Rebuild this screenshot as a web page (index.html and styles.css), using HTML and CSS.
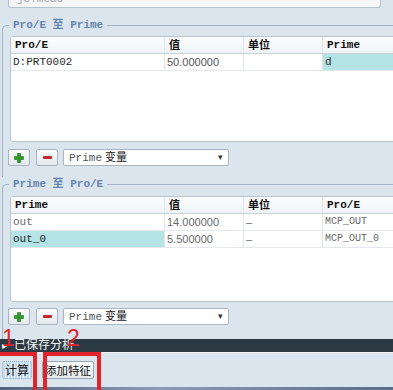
FILE: index.html
```html
<!DOCTYPE html>
<html>
<head>
<meta charset="utf-8">
<link rel="stylesheet" href="styles.css">
</head>
<body>
<div class="top"><span>jc.mcad</span></div>

<fieldset class="group">
  <legend>Pro/E 至 Prime</legend>
  <div class="group-body g1">
    <div class="table">
      <div class="row head">
        <div class="cell mono">Pro/E</div>
        <div class="cell">值</div>
        <div class="cell">单位</div>
        <div class="cell mono">Prime</div>
      </div>
      <div class="row">
        <div class="cell mono">D:PRT0002</div>
        <div class="cell num">50.000000</div>
        <div class="cell"></div>
        <div class="cell mono sel">d</div>
      </div>
    </div>
    <div class="tools">
      <button class="btn plus" type="button"><svg width="10" height="10" viewBox="0 0 10 10"><path d="M3.5 0.5h3v3h3v3h-3v3h-3v-3h-3v-3h3z" fill="#2f9a25" stroke="#1d6e17" stroke-width="0.6"/></svg></button>
      <button class="btn minus" type="button"><span class="bar"></span></button>
      <div class="select"><span class="mono">Prime</span> 变量<span class="arrow">▾</span></div>
    </div>
  </div>
</fieldset>

<fieldset class="group">
  <legend>Prime 至 Pro/E</legend>
  <div class="group-body g2">
    <div class="table">
      <div class="row head">
        <div class="cell mono">Prime</div>
        <div class="cell">值</div>
        <div class="cell">单位</div>
        <div class="cell mono">Pro/E</div>
      </div>
      <div class="row">
        <div class="cell mono dim">out</div>
        <div class="cell num dim">14.000000</div>
        <div class="cell dim">–</div>
        <div class="cell mono dim small">MCP_OUT</div>
      </div>
      <div class="row">
        <div class="cell mono sel">out_0</div>
        <div class="cell num dim">5.500000</div>
        <div class="cell dim">–</div>
        <div class="cell mono dim small">MCP_OUT_0</div>
      </div>
    </div>
    <div class="tools">
      <button class="btn plus" type="button"><svg width="10" height="10" viewBox="0 0 10 10"><path d="M3.5 0.5h3v3h3v3h-3v3h-3v-3h-3v-3h3z" fill="#2f9a25" stroke="#1d6e17" stroke-width="0.6"/></svg></button>
      <button class="btn minus" type="button"><span class="bar"></span></button>
      <div class="select"><span class="mono">Prime</span> 变量<span class="arrow">▾</span></div>
    </div>
  </div>
</fieldset>

<div class="saved"><span class="tri">▸</span>已保存分析</div>
<div class="actions">
  <button class="act calc" type="button">计算</button>
  <button class="act add" type="button">添加特征</button>
</div>
<div class="footer"></div>

<div class="mark box1"></div>
<div class="mark box2"></div>
<div class="num-mark n1">1</div>
<div class="num-mark n2">2</div>
</body>
</html>
```

FILE: styles.css
```css
body {
  margin: 0;
  width: 393px;
  height: 390px;
  overflow: hidden;
  position: relative;
  background: #dbe5ee;
  font: 11px/17px "Liberation Sans", "Noto Sans CJK SC", sans-serif;
  color: #1d1d1d;
}

.mono {
  font-family: "Liberation Mono", "Noto Sans CJK SC", monospace;
}

.top {
  margin: 0 12px 0 8px;
  height: 7px;
  border: 1px solid #b6c2cd;
  border-top: none;
  border-radius: 0 0 3px 3px;
  background: #f4f6f8;
  overflow: hidden;
}
.top span {
  display: block;
  margin-top: -8px;
  padding-left: 8px;
  font: 11px/14px "Liberation Mono", monospace;
  color: #a0a8b0;
}

.group {
  margin: 10px -30px 0 2px;
  padding: 0;
  border: 1px solid #a4b4c4;
  border-right: none;
  border-bottom: none;
  border-radius: 5px 0 0 0;
  min-width: 0;
}
.group + .group {
  margin-top: 0;
}
.group legend {
  margin-left: 6px;
  padding: 0 4px;
  font: bold 11px/14px "Liberation Mono", "Noto Sans CJK SC", monospace;
  color: #6385ab;
}

.group-body {
  padding: 4px 0 11px 7px;
}
.group-body.g2 {
  padding: 5px 0 14px 7px;
}

.table {
  width: 430px;
  height: 106px;
  box-sizing: border-box;
  border: 1px solid #b9c4ce;
  border-radius: 3px;
  background: #fff;
  overflow: hidden;
}
.row {
  display: grid;
  grid-template-columns: 154px 79px 79px 1fr;
  height: 17px;
  box-sizing: border-box;
  border-bottom: 1px solid #e4e8ec;
}
.row.head {
  background: linear-gradient(#fcfdfd, #eff2f5);
  border-bottom: 1px solid #c8d0d8;
  font-weight: bold;
}
.cell {
  box-sizing: border-box;
  border-right: 1px solid #e0e4e8;
  padding-left: 2px;
  line-height: 16px;
  white-space: nowrap;
  overflow: hidden;
  color: #2a2a2a;
}
.head .cell {
  padding-left: 4px;
  color: #111;
}
.cell.num {
  font-family: "Liberation Sans", sans-serif;
  color: #555;
}
.cell.dim {
  color: #6a6a6a;
}
.cell.small {
  font-size: 10px;
}
.cell.sel {
  background: #b4e4e6;
}

.tools {
  display: flex;
  align-items: center;
  margin: 7px 0 0 -2px;
  height: 17px;
}
.g2 .tools {
  margin-top: 6px;
}
.btn {
  width: 22px;
  height: 17px;
  padding: 0;
  margin: 0 6px 0 0;
  border: 1px solid #a9b5c1;
  border-radius: 2px;
  background: linear-gradient(#fbfcfd, #e4e9ee);
  display: flex;
  align-items: center;
  justify-content: center;
}
.btn.minus {
  margin-right: 5px;
}
.bar {
  width: 9px;
  height: 3px;
  background: #c4262b;
  border-radius: 1px;
}
.select {
  position: relative;
  width: 166px;
  height: 17px;
  box-sizing: border-box;
  border: 1px solid #a9b5c1;
  border-radius: 2px;
  background: #fff;
  padding-left: 5px;
  line-height: 15px;
  font-size: 11px;
  color: #222;
}
.select .mono {
  color: #555;
}
.select .arrow {
  position: absolute;
  right: 5px;
  top: 0;
  font-size: 9px;
  color: #333;
}

.saved {
  display: flex;
  align-items: center;
  height: 13px;
  background: #2e3a43;
  color: #f2f4f6;
  font-size: 12px;
  line-height: 13px;
  padding-left: 2px;
}
.saved .tri {
  font-size: 10px;
  margin-right: 4px;
  width: 8px;
}

.actions {
  display: flex;
  align-items: center;
  height: 34px;
  border-top: 1px solid #eef3f7;
  padding-left: 2px;
  gap: 10px;
}
.act {
  height: 18px;
  padding: 0 2px;
  font: 12px/16px "Noto Sans CJK SC", sans-serif;
  color: #111;
  border-radius: 2px;
  white-space: nowrap;
}
.act.calc {
  border: 1px dotted #8fb0d0;
  background: repeating-linear-gradient(90deg, #c7dcef 0 2px, #e4eef7 2px 3px);
}
.act.add {
  font-size: 11.5px;
  border: 1px solid #98a6b4;
  background: linear-gradient(#fbfcfd, #e6ebf0);
}

.footer {
  height: 4px;
  background: linear-gradient(90deg, #50647c, #8c9db3 40%, #5a6e88);
}

.mark {
  position: absolute;
  border: 4px solid #e3242b;
  box-sizing: border-box;
}
.box1 {
  left: -4px;
  top: 352px;
  width: 41px;
  height: 48px;
}
.box2 {
  left: 43px;
  top: 352px;
  width: 58px;
  height: 48px;
}
.num-mark {
  position: absolute;
  top: 326px;
  font: 23px/24px "Liberation Sans", sans-serif;
  color: #e3242b;
}
.n1 { left: 2px; }
.n2 { left: 67px; }
```
